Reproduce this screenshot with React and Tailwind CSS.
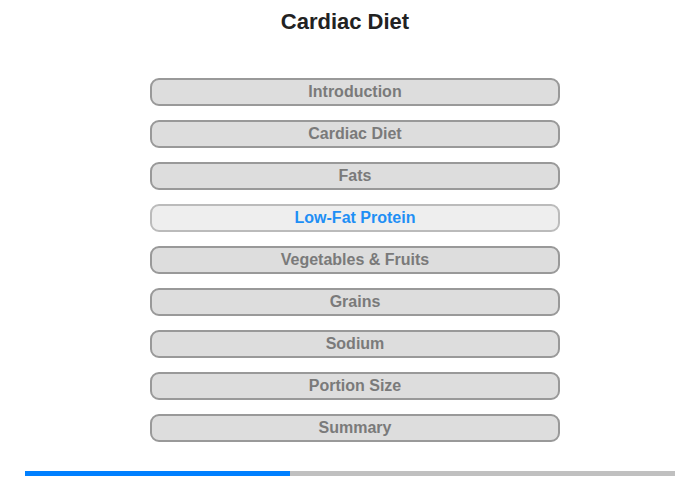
import React from "react";

const sections = [
  "Introduction",
  "Cardiac Diet",
  "Fats",
  "Low-Fat Protein",
  "Vegetables & Fruits",
  "Grains",
  "Sodium",
  "Portion Size",
  "Summary",
];

export default function App() {
  const active = "Low-Fat Protein";

  return (
    <div className="w-[700px] h-[480px] bg-white font-['Liberation_Sans',Arial,sans-serif] flex flex-col items-center">
      <h1 className="pt-[9px] mr-[10px] text-[22px] leading-[26px] font-bold text-[#222]">Cardiac Diet</h1>

      <div className="mt-[43px] ml-[10px] flex flex-col gap-[14px]">
        {sections.map((s) =>
          s === active ? (
            <button
              key={s}
              className="w-[410px] h-[28px] rounded-[9px] border-2 border-[#bbbbbb] bg-[#eeeeee] text-[16px] font-bold text-[#1e8ff5] leading-none"
            >
              {s}
            </button>
          ) : (
            <button
              key={s}
              className="w-[410px] h-[28px] rounded-[9px] border-2 border-[#999999] bg-[#dddddd] text-[16px] font-bold text-[#7a7a7a] leading-none"
            >
              {s}
            </button>
          )
        )}
      </div>

      <div className="mt-[29px] w-[650px] h-[5px] bg-[#c0c0c0] flex">
        <div className="w-[265px] h-full bg-[#0080ff]" />
      </div>
    </div>
  );
}
